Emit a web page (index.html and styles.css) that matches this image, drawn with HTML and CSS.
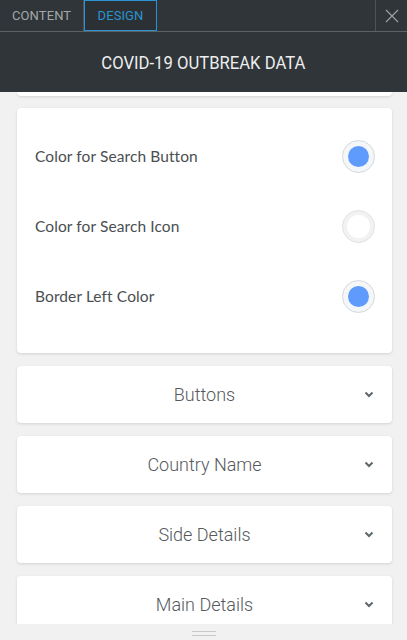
FILE: index.html
```html
<!DOCTYPE html>
<html>
<head>
<meta charset="utf-8">
<link rel="stylesheet" href="styles.css">
</head>
<body>
<div class="app">
  <div class="tabbar">
    <div class="tab">CONTENT</div>
    <div class="tab active">DESIGN</div>
    <div class="spacer"></div>
    <div class="close">
      <svg width="14" height="14" viewBox="0 0 14 14"><path d="M1 1L13 13M13 1L1 13" stroke="#9aa0a3" stroke-width="1.2" fill="none"/></svg>
    </div>
  </div>
  <div class="header"><span class="header-text">COVID-19 OUTBREAK DATA</span></div>
  <div class="scroll">
    <div class="card tail"></div>
    <div class="card colors">
      <div class="row"><span class="label">Color for Search Button</span><span class="swatch"><span class="dot blue"></span></span></div>
      <div class="row"><span class="label">Color for Search Icon</span><span class="swatch light"><span class="dot white"></span></span></div>
      <div class="row"><span class="label">Border Left Color</span><span class="swatch"><span class="dot blue"></span></span></div>
    </div>
    <div class="card acc"><span class="acc-title">Buttons</span><svg class="chev" width="10" height="7" viewBox="0 0 10 7"><path d="M1.5 1.5L5 5L8.5 1.5" stroke="#5d676c" stroke-width="2" fill="none"/></svg></div>
    <div class="card acc"><span class="acc-title">Country Name</span><svg class="chev" width="10" height="7" viewBox="0 0 10 7"><path d="M1.5 1.5L5 5L8.5 1.5" stroke="#5d676c" stroke-width="2" fill="none"/></svg></div>
    <div class="card acc"><span class="acc-title">Side Details</span><svg class="chev" width="10" height="7" viewBox="0 0 10 7"><path d="M1.5 1.5L5 5L8.5 1.5" stroke="#5d676c" stroke-width="2" fill="none"/></svg></div>
    <div class="card acc"><span class="acc-title">Main Details</span><svg class="chev" width="10" height="7" viewBox="0 0 10 7"><path d="M1.5 1.5L5 5L8.5 1.5" stroke="#5d676c" stroke-width="2" fill="none"/></svg></div>
  </div>
  <div class="footer"><span class="handle"></span></div>
</div>
</body>
</html>
```
FILE: styles.css
```css
html, body { margin: 0; padding: 0; }
body { background: #f1f1f1; font-family: Roboto, "Liberation Sans", sans-serif; }
.app { width: 407px; height: 640px; display: flex; flex-direction: column; overflow: hidden; }
.tabbar { height: 31px; background: #2f3538; border-bottom: 1px solid #5b6164; display: flex; flex-shrink: 0; }
.tab { height: 31px; box-sizing: border-box; padding: 0 12px; display: flex; align-items: center; font-size: 13px; color: #a3a8ab; letter-spacing: 0.1px; border-right: 1px solid #4d5356; }
.tab:first-child { width: 84px; }
.tab.active { width: 73px; color: #2b93d1; border: 1px solid #2b93d1; background: #2a3033; justify-content: center; padding: 0; }
.spacer { flex: 1; }
.close { width: 31px; border-left: 1px solid #4d5356; display: flex; align-items: center; justify-content: center; }
.header { height: 60px; flex-shrink: 0; background: #2f3538; display: flex; align-items: center; justify-content: center; padding-top: 2px; box-sizing: border-box; }
.header-text { display: inline-block; color: #eceeef; font-size: 18.5px; font-weight: 400; transform: scaleX(0.9); white-space: nowrap; }
.scroll { flex: 1; overflow: hidden; padding: 0 15px 0 17px; display: flex; flex-direction: column; gap: 13px; }
.card { background: #fff; border-radius: 4px; box-shadow: 0 1px 3px rgba(0,0,0,0.13); flex-shrink: 0; }
.card.tail { height: 4px; border-radius: 0 0 4px 4px; margin-bottom: -1px; }
.colors { padding: 13px 17px 22px 18px; display: flex; flex-direction: column; }
.row { height: 70px; display: flex; align-items: center; justify-content: space-between; }
.label { font-family: Lato, "Open Sans", sans-serif; font-size: 15.5px; color: #4a4e51; letter-spacing: 0.1px; }
.swatch { width: 31px; height: 31px; border-radius: 50%; border: 1px solid #d4d9dc; background: #f5f6f7; display: flex; align-items: center; justify-content: center; }
.swatch.light { border-color: #dfe2e4; background: #f2f2f2; }
.dot { width: 21px; height: 21px; border-radius: 50%; }
.dot.blue { background: #5e9bfc; }
.dot.white { background: #fff; width: 23px; height: 23px; }
.acc { height: 57px; display: flex; align-items: center; justify-content: center; position: relative; }
.acc-title { font-size: 18px; font-weight: 300; color: #55595c; }
.chev { position: absolute; right: 18px; top: 25px; }
.footer { height: 16px; flex-shrink: 0; background: #f1f1f1; display: flex; justify-content: center; align-items: center; }
.handle { width: 24px; height: 3px; border-top: 1px solid #c9c9c9; border-bottom: 1px solid #c9c9c9; margin-top: 3px; }
```
